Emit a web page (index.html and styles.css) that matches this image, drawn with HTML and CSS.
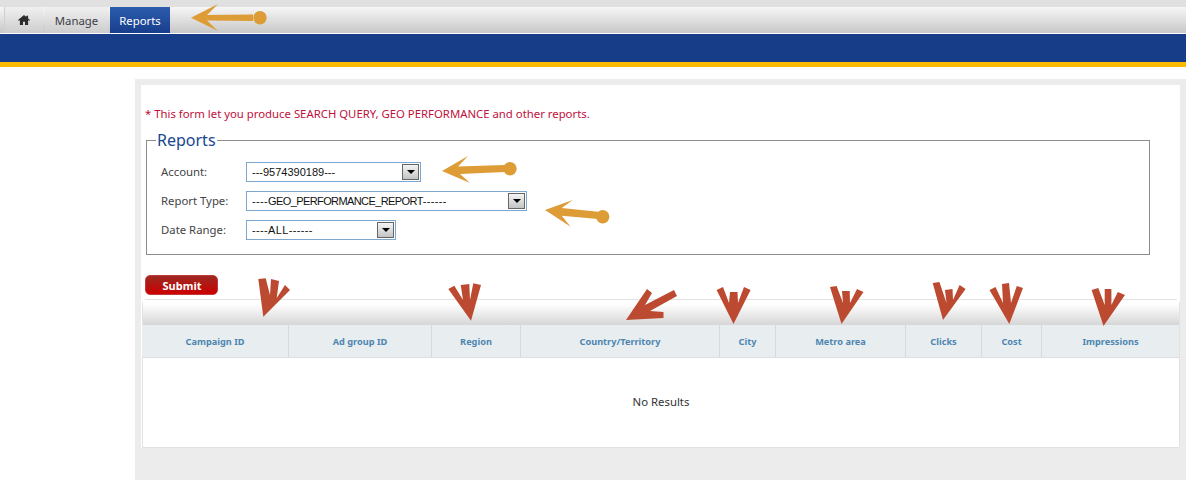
FILE: index.html
```html
<!DOCTYPE html>
<html>
<head>
<meta name="viewport" content="width=device-width, initial-scale=1.0">
<title>Reports</title>
<link rel="stylesheet" href="styles.css">
</head>
<body>

<div class="top-strip"></div>
<div class="nav">
  <a class="tab tab-home">
    <svg width="12" height="10" viewBox="0 0 13 11"><path d="M6.5 0 0 5.6l.8.9L2 5.5V11h3.4V7.4h2.2V11H11V5.5l1.2 1 .8-.9L11 3.9V.8H9v1.4z" fill="#2b2b2b"/></svg>
  </a>
  <a class="tab tab-manage">Manage</a>
  <a class="tab tab-reports">Reports</a>
</div>
<div class="banner"></div>

<div class="main">
  <div class="side"></div>
  <div class="content">
    <div class="panel">
      <p class="note">* This form let you produce SEARCH QUERY, GEO PERFORMANCE and other reports.</p>

      <fieldset class="box">
        <legend>Reports</legend>
        <div class="row">
          <label>Account:</label>
          <div class="select select-account">---9574390189---<span class="drop"><i></i></span></div>
        </div>
        <div class="row">
          <label>Report Type:</label>
          <div class="select select-type">----<span class="caps">GEO_PERFORMANCE_REPORT</span>------<span class="drop"><i></i></span></div>
        </div>
        <div class="row">
          <label>Date Range:</label>
          <div class="select select-date">----ALL------<span class="drop"><i></i></span></div>
        </div>
      </fieldset>

      <button type="button" class="submit">Submit</button>

      <div class="results">
        <div class="results-head"></div>
        <div class="cols">
          <div style="width:147px">Campaign ID</div>
          <div style="width:143px">Ad group ID</div>
          <div style="width:89px">Region</div>
          <div style="width:199px">Country/Territory</div>
          <div style="width:56px">City</div>
          <div style="width:130px">Metro area</div>
          <div style="width:76px">Clicks</div>
          <div style="width:60px">Cost</div>
          <div class="last">Impressions</div>
        </div>
        <div class="empty">No Results</div>
      </div>
    </div>
  </div>
</div>

<!-- arrows drawn on top of the screenshot -->
<svg class="marks" width="1186" height="480" viewBox="0 0 1186 480">
  <g fill="#dd9c36">
    <path d="M191 17.7 218 4 207 15 253 14.5V21L207 20.5 218 31z"/>
    <circle cx="260" cy="17.7" r="6.7"/>
    <path d="M442 171 468 156 458 166.5 505 165V172L460 174 470 183z"/>
    <circle cx="510" cy="168.7" r="6.7"/>
    <path d="M545 210 572.7 200 561.7 208 598 211.7V219L561.7 215.7 570.7 226.7z"/>
    <circle cx="602.7" cy="216.7" r="6.7"/>
  </g>
  <g fill="#bc4a30">
    <path d="M263.3 316.7 258.3 279 265.7 278.3 270 295 271 279 279 281 276.7 298 285 285 290 290z"/>
    <path d="M471 320.7 448.3 289 454.3 285.7 463 300 460.7 285 469.3 284 470 300 473.3 283.3 481 285z"/>
    <path d="M626 320 647 289 652 293 645 305 674 290 677 296 650 311 663.5 312V318z"/>
    <path d="M733.5 324 716.6 290 723 287 729 303 730 292H737.5L738 303 744 287 750.6 290z"/>
    <path d="M841.5 324 830 287 836.6 286 843 303 842 291H849.7L850 303 857 289 863.5 292z"/>
    <path d="M943 320 932.7 283 939.4 282 946.5 303 945 290 952.5 289 953 300 959.6 285 965.6 289z"/>
    <path d="M1009.3 324 989.5 290 995.5 287 1003 303 1002 284 1009 283 1011 303 1016.8 286 1023 288z"/>
    <path d="M1103.5 326 1091.6 290 1098.3 288 1104.7 305V289H1111.4V305L1117.8 292 1125 295z"/>
  </g>
</svg>

</body>
</html>
```

FILE: styles.css
```css
* {
  box-sizing: border-box;
}

html, body {
  height: 480px;
  overflow: hidden;
}

body {
  margin: 0;
  position: relative;
  background-color: #ffffff;
  font-family: "Noto Sans", sans-serif;
  font-size: 11.35px;
  color: #333333;
}

.top-strip {
  height: 7px;
  background-color: #e0e0e0;
}

.nav {
  display: flex;
  gap: 2px;
  height: 26px;
  padding-left: 4px;
  background: linear-gradient(#f6f6f6, #c8c8c8);
}

.tab {
  display: flex;
  align-items: center;
  justify-content: center;
  height: 26px;
  color: #3d3d4a;
}

.tab-home {
  width: 39px;
  border-left: 1px solid #cfcfcf;
  background: linear-gradient(#f0f0f0, #cdcdcd);
}

.tab-manage {
  width: 63px;
  background: linear-gradient(#f0f0f0, #cdcdcd);
}

.tab-reports {
  width: 60px;
  color: #ffffff;
  background: linear-gradient(#2d5cae, #173e8c);
}

.banner {
  height: 33px;
  margin-top: 1px;
  background-color: #173c88;
  border-bottom: 5px solid #fdb900;
}

.main {
  display: flex;
  height: 401px;
  margin-top: 12px;
}

.side {
  width: 135px;
}

.content {
  flex: 1;
  background-color: #ececec;
  padding: 6px 6px 0 6px;
}

.panel {
  height: 363px;
  background-color: #ffffff;
  padding-top: 20px;
}

.note {
  margin: 0 0 10px 4px;
  line-height: 18px;
  color: #c0103c;
}

/* Report filters */
.box {
  width: 1004px;
  height: 122px;
  margin: 0 0 20px 5px;
  padding: 15px 0 0 14px;
  border: 1px solid #8c8c8c;
}

.box legend {
  padding: 0 1px;
  margin-left: -5px;
  font-size: 16px;
  line-height: 14px;
  color: #17468f;
}

.row {
  display: flex;
  align-items: center;
  height: 20px;
  margin-bottom: 9px;
}

.row label {
  width: 85px;
  padding-bottom: 2px;
  color: #444444;
}

.select {
  position: relative;
  height: 20px;
  padding-left: 5px;
  border: 1px solid #7ba7d0;
  font-family: "Liberation Sans", sans-serif;
  font-size: 11px;
  line-height: 18px;
  color: #111111;
}

.select-account {
  width: 175px;
}

.select-type {
  width: 281px;
  letter-spacing: 0.35px;
}

.select-date {
  width: 150px;
  letter-spacing: 0.35px;
}

/* capitals run narrower than the dashes round them */
.caps {
  letter-spacing: -0.6px;
}

.drop {
  position: absolute;
  top: 1px;
  right: 1px;
  display: flex;
  align-items: center;
  justify-content: center;
  width: 17px;
  height: 16px;
  border: 1px solid #666666;
  background: linear-gradient(#f4f4f4, #c4c4c4);
}

.drop i {
  border-top: 4px solid #000000;
  border-left: 4px solid transparent;
  border-right: 4px solid transparent;
}

.submit {
  display: block;
  width: 73px;
  height: 20px;
  margin-left: 4px;
  padding: 0 0 0 1px;
  border: 1px solid #c23a3a;
  border-radius: 5px;
  background: linear-gradient(#9c2a22, #cc0000);
  color: #ffffff;
  font-family: "Noto Sans", sans-serif;
  font-size: 11px;
  font-weight: bold;
}

/* Results table */
.results {
  height: 149px;
  margin: 4px 0 0 1px;
  border: 1px solid #e2e2e2;
  border-top-left-radius: 5px;
  border-top-right-radius: 5px;
}

.results-head {
  height: 25px;
  background: linear-gradient(#ffffff 15%, #d6d6d6);
}

.cols {
  display: flex;
  height: 33px;
  margin-left: -1px;
  background-color: #e8edf0;
  border-bottom: 1px solid #dcdfe1;
  font-size: 9.2px;
  font-weight: bold;
  color: #4d86b0;
}

.cols div {
  display: flex;
  align-items: center;
  justify-content: center;
  border-right: 1px solid #d6dadc;
}

.cols .last {
  flex: 1;
  border-right: none;
}

.empty {
  padding-top: 35px;
  text-align: center;
  line-height: 18px;
}

.marks {
  position: absolute;
  top: 0;
  left: 0;
  pointer-events: none;
}
```
